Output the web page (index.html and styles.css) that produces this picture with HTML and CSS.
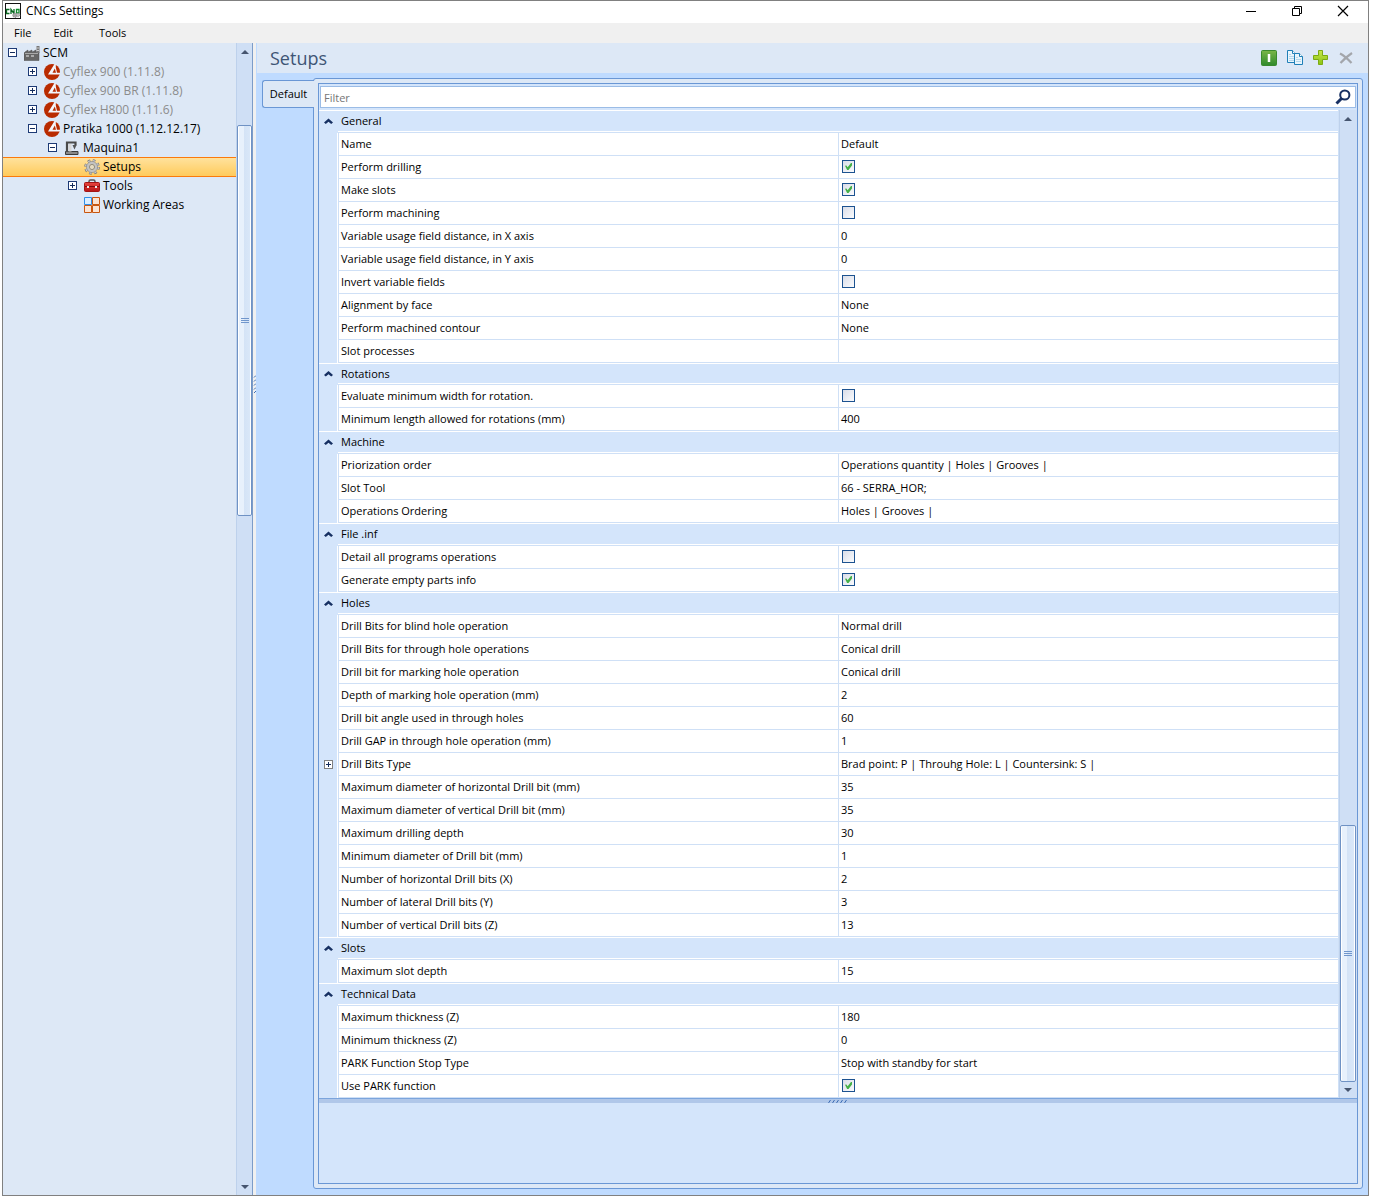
FILE: index.html
```html
<!DOCTYPE html>
<html lang="en">
<head>
<meta charset="utf-8">
<title>CNCs Settings</title>
<link rel="stylesheet" href="styles.css">
</head>
<body>
<svg class="defs" aria-hidden="true">
  <defs>
    <linearGradient id="g-green" x1="0" y1="0" x2="0" y2="1"><stop offset="0" stop-color="#7ab648"/><stop offset="1" stop-color="#2f8a2c"/></linearGradient>
    <linearGradient id="g-lime" x1="0" y1="0" x2="0" y2="1"><stop offset="0" stop-color="#c6e64c"/><stop offset="1" stop-color="#8cc413"/></linearGradient>
    <linearGradient id="g-red" x1="0" y1="0" x2="0" y2="1"><stop offset="0" stop-color="#e8473f"/><stop offset="1" stop-color="#b81414"/></linearGradient>
    <symbol id="brand" viewBox="0 0 16 16"><circle cx="8" cy="8" r="8" fill="#b92b00"/><path d="M10.500 0 4 10.500H16V8.800H13L11.800 3.500V0z" fill="#f3f6fb"/><path d="M10.800 4.500 8.500 8.800H12z" fill="#b92b00"/></symbol>
  </defs>
</svg>
<div class="window">
  <header class="titlebar">
    <svg class="icon16" viewBox="0 0 16 16" aria-hidden="true"><rect x=".5" y=".5" width="15" height="15" fill="#fff" stroke="#111"/><path d="M4.500 6.500h-3v4h3M6 11V6.500L9 10.500V6" fill="none" stroke="#0a6a22" stroke-width="1.300"/><path d="M11.500 6.500h2.500v3.500h-2.500z" fill="none" stroke="#0f8a2c" stroke-width="1.300"/><circle cx="10" cy="12.300" r="2.200" fill="#aaa" stroke="#777" stroke-dasharray="1 1"/><circle cx="13" cy="12" r="1.800" fill="#bbb" stroke="#888" stroke-dasharray="1 1"/></svg>
    <h1 class="window-title">CNCs Settings</h1>
    <div class="window-buttons">
      <button class="window-button" aria-label="Minimize"><svg width="12" height="12" viewBox="0 0 12 12"><path d="M1 6.500h10" stroke="#000"/></svg></button>
      <button class="window-button" aria-label="Restore"><svg width="12" height="12" viewBox="0 0 12 12"><path d="M1.500 3.500h7v7h-7zM3.500 3V1.500h7v7H9" fill="none" stroke="#000"/></svg></button>
      <button class="window-button" aria-label="Close"><svg width="12" height="12" viewBox="0 0 12 12"><path d="M1 1l10 10M11 1 1 11" stroke="#000" stroke-width="1.200"/></svg></button>
    </div>
  </header>
  <nav class="menubar" aria-label="Main menu">
    <button class="menu-item">File</button>
    <button class="menu-item">Edit</button>
    <button class="menu-item">Tools</button>
  </nav>
  <div class="workspace">
    <aside class="sidebar">
      <ul class="tree">
        <li class="node"><button class="toggle open" aria-label="Collapse SCM"></button><svg class="icon16" viewBox="0 0 16 16"><path d="M1 7l3-2v2l4-2v2l4-2v2h3v8.500H0V8z" fill="#666" stroke="#4a4a4a" stroke-width=".5"/><path d="M1 8.500h13" stroke="#aaa"/><path d="M2 11h3M7 11h3" stroke="#eee"/><path d="M12.500 1h3v7h-3z" fill="#777"/><path d="M12.500 3h2.500M12.500 5.500h2.500" stroke="#ccc"/></svg><span>SCM</span></li>
        <li class="node level1 muted"><button class="toggle" aria-label="Expand Cyflex 900"></button><svg class="icon16"><use href="#brand"/></svg><span>Cyflex 900 (1.11.8)</span></li>
        <li class="node level1 muted"><button class="toggle" aria-label="Expand Cyflex 900 BR"></button><svg class="icon16"><use href="#brand"/></svg><span>Cyflex 900 BR (1.11.8)</span></li>
        <li class="node level1 muted"><button class="toggle" aria-label="Expand Cyflex H800"></button><svg class="icon16"><use href="#brand"/></svg><span>Cyflex H800 (1.11.6)</span></li>
        <li class="node level1"><button class="toggle open" aria-label="Collapse Pratika 1000"></button><svg class="icon16"><use href="#brand"/></svg><span>Pratika 1000 (1.12.12.17)</span></li>
        <li class="node level2"><button class="toggle open" aria-label="Collapse Maquina1"></button><svg class="icon16" viewBox="0 0 16 16"><path d="M1.500 11.500v3h12.500v-3z" fill="#888" stroke="#3c3c3c"/><path d="M3 12V2.500h8.500v3" fill="none" stroke="#4a4a4a" stroke-width="2.200"/><path d="M4.500 4h3v7.500h-3z" fill="#d8d8d8"/><path d="M8.500 5h4l-2 4.500z" fill="#555"/></svg><span>Maquina1</span></li>
        <li class="node level3 selected"><span class="toggle-space"></span><svg class="icon16" viewBox="0 0 16 16"><circle cx="8" cy="8" r="6.300" fill="none" stroke="#777" stroke-width="3" stroke-dasharray="2.500 2.450"/><circle cx="8" cy="8" r="6.300" fill="none" stroke="#c9c9c9" stroke-width="1.600" stroke-dasharray="2.100 2.850" stroke-dashoffset="-.2"/><circle cx="8" cy="8" r="4.200" fill="#ffe39a" stroke="#c2c2c2" stroke-width="2.600"/><circle cx="8" cy="8" r="2.600" fill="#e6dcc0" stroke="#777" stroke-width=".8"/><circle cx="8" cy="8" r="5.600" fill="none" stroke="#888" stroke-width=".6"/></svg><span>Setups</span></li>
        <li class="node level3"><button class="toggle" aria-label="Expand Tools"></button><svg class="icon16" viewBox="0 0 16 16"><path d="M5 5V3.500Q5 2 6.500 2h3Q11 2 11 3.500V5" fill="none" stroke="#555" stroke-width="1.500"/><rect x=".5" y="4.500" width="15" height="9" rx="1" fill="url(#g-red)" stroke="#a31515"/><path d="M1 8.500h14" stroke="#7f0d0d"/><path d="M3 8h2v2H3zM11 8h2v2h-2z" fill="#eee"/></svg><span>Tools</span></li>
        <li class="node level3"><span class="toggle-space"></span><svg class="icon16" viewBox="0 0 16 16"><path d="M8.500 .5h7v7h-7zM.5 8.500h7v7h-7zM8.500 8.500h7v7h-7z" fill="#fbe3d3" stroke="#c8560f"/><path d="M.5 .5h7v7h-7z" fill="#d9edff" stroke="#2f8fe8"/></svg><span>Working Areas</span></li>
      </ul>
      <div class="scrollbar tree-scroll" aria-hidden="true"><i class="arrow up"></i><i class="thumb"></i><i class="arrow down"></i></div>
    </aside>
    <div class="splitter" aria-hidden="true"><svg width="3" height="18" viewBox="0 0 3 18"><path d="M1 2.500l2-2M1 6.500l2-2M1 10.500l2-2M1 14.500l2-2M1 18l2-2" stroke="#3d6db5"/></svg></div>
    <main class="main">
      <div class="main-header">
        <h2 class="main-title">Setups</h2>
        <div class="toolbar">
          <button class="tool" aria-label="Activate"><svg class="icon16" viewBox="0 0 16 16"><rect x=".5" y=".5" width="15" height="15" rx="1" fill="url(#g-green)" stroke="#3a8a2e"/><path d="M8 4v8" stroke="#fff" stroke-width="2.500"/></svg></button>
          <button class="tool" aria-label="Copy"><svg class="icon16" viewBox="0 0 16 16"><path d="M.5 .5h5l3 3v9h-8z" fill="#e9f5fc" stroke="#2080b8"/><path d="M5.500 .5v3h3" fill="#fff" stroke="#2080b8"/><path d="M2 4.500h2M2 6.500h5M2 8.500h5M2 10.500h5" stroke="#b5d8ec"/><path d="M7.500 3.500h5l3 3v8h-8z" fill="#e9f5fc" stroke="#2080b8"/><path d="M12.500 3.500v3h3" fill="#fff" stroke="#2080b8"/><path d="M9 7.500h2M9 9.500h5M9 11.500h5" stroke="#b5d8ec"/></svg></button>
          <button class="tool" aria-label="Add"><svg class="icon16" viewBox="0 0 16 16"><path d="M5.500 .5h4v5h5v4h-5v5h-4v-5h-5v-4h5z" fill="url(#g-lime)" stroke="#7cab12"/></svg></button>
          <button class="tool" aria-label="Delete"><svg class="icon16" viewBox="0 0 16 16"><path d="M1 3.500Q6 6 12.500 13M13 3Q7 7 1.500 13" fill="none" stroke="#a3a6ab" stroke-width="2.200"/></svg></button>
        </div>
      </div>
      <div class="content">
        <button class="tab">Default</button>
        <section class="panel">
          <div class="panel-inner">
            <div class="filter">
              <input class="filter-input" type="text" placeholder="Filter" aria-label="Filter">
              <svg class="search-icon" width="16" height="16" viewBox="0 0 16 16" aria-hidden="true"><circle cx="9.800" cy="6" r="4.600" fill="#fff" stroke="#173062" stroke-width="2"/><path d="M6.500 9.500l-5 5" stroke="#173062" stroke-width="3"/></svg>
            </div>
            <div class="grid-area">
              <table class="properties">
                <colgroup><col class="gutter-col"><col><col></colgroup>
                <tbody>
                  <tr class="category"><td class="gutter"><button class="chevron" aria-label="Collapse General"></button></td><th colspan="2">General</th></tr>
                  <tr><td class="gutter"></td><td>Name</td><td>Default</td></tr>
                  <tr><td class="gutter"></td><td><label for="drilling">Perform drilling</label></td><td><input type="checkbox" id="drilling" checked></td></tr>
                  <tr><td class="gutter"></td><td><label for="slots">Make slots</label></td><td><input type="checkbox" id="slots" checked></td></tr>
                  <tr><td class="gutter"></td><td><label for="machining">Perform machining</label></td><td><input type="checkbox" id="machining"></td></tr>
                  <tr><td class="gutter"></td><td>Variable usage field distance, in X axis</td><td>0</td></tr>
                  <tr><td class="gutter"></td><td>Variable usage field distance, in Y axis</td><td>0</td></tr>
                  <tr><td class="gutter"></td><td><label for="invert">Invert variable fields</label></td><td><input type="checkbox" id="invert"></td></tr>
                  <tr><td class="gutter"></td><td>Alignment by face</td><td>None</td></tr>
                  <tr><td class="gutter"></td><td>Perform machined contour</td><td>None</td></tr>
                  <tr><td class="gutter"></td><td>Slot processes</td><td></td></tr>
                </tbody>
                <tbody>
                  <tr class="category compact"><td class="gutter"><button class="chevron" aria-label="Collapse Rotations"></button></td><th colspan="2">Rotations</th></tr>
                  <tr><td class="gutter"></td><td><label for="minwidth">Evaluate minimum width for rotation.</label></td><td><input type="checkbox" id="minwidth"></td></tr>
                  <tr><td class="gutter"></td><td>Minimum length allowed for rotations (mm)</td><td>400</td></tr>
                </tbody>
                <tbody>
                  <tr class="category"><td class="gutter"><button class="chevron" aria-label="Collapse Machine"></button></td><th colspan="2">Machine</th></tr>
                  <tr><td class="gutter"></td><td>Priorization order</td><td>Operations quantity | Holes | Grooves |</td></tr>
                  <tr><td class="gutter"></td><td>Slot Tool</td><td>66 - SERRA_HOR;</td></tr>
                  <tr><td class="gutter"></td><td>Operations Ordering</td><td>Holes | Grooves |</td></tr>
                </tbody>
                <tbody>
                  <tr class="category"><td class="gutter"><button class="chevron" aria-label="Collapse File .inf"></button></td><th colspan="2">File .inf</th></tr>
                  <tr><td class="gutter"></td><td><label for="detail">Detail all programs operations</label></td><td><input type="checkbox" id="detail"></td></tr>
                  <tr><td class="gutter"></td><td><label for="empty">Generate empty parts info</label></td><td><input type="checkbox" id="empty" checked></td></tr>
                </tbody>
                <tbody>
                  <tr class="category"><td class="gutter"><button class="chevron" aria-label="Collapse Holes"></button></td><th colspan="2">Holes</th></tr>
                  <tr><td class="gutter"></td><td>Drill Bits for blind hole operation</td><td>Normal drill</td></tr>
                  <tr><td class="gutter"></td><td>Drill Bits for through hole operations</td><td>Conical drill</td></tr>
                  <tr><td class="gutter"></td><td>Drill bit for marking hole operation</td><td>Conical drill</td></tr>
                  <tr><td class="gutter"></td><td>Depth of marking hole operation (mm)</td><td>2</td></tr>
                  <tr><td class="gutter"></td><td>Drill bit angle used in through holes</td><td>60</td></tr>
                  <tr><td class="gutter"></td><td>Drill GAP in through hole operation (mm)</td><td>1</td></tr>
                  <tr><td class="gutter"><button class="toggle" aria-label="Expand Drill Bits Type"></button></td><td>Drill Bits Type</td><td>Brad point: P | Throuhg Hole: L | Countersink: S |</td></tr>
                  <tr><td class="gutter"></td><td>Maximum diameter of horizontal Drill bit (mm)</td><td>35</td></tr>
                  <tr><td class="gutter"></td><td>Maximum diameter of vertical Drill bit (mm)</td><td>35</td></tr>
                  <tr><td class="gutter"></td><td>Maximum drilling depth</td><td>30</td></tr>
                  <tr><td class="gutter"></td><td>Minimum diameter of Drill bit (mm)</td><td>1</td></tr>
                  <tr><td class="gutter"></td><td>Number of horizontal Drill bits (X)</td><td>2</td></tr>
                  <tr><td class="gutter"></td><td>Number of lateral Drill bits (Y)</td><td>3</td></tr>
                  <tr><td class="gutter"></td><td>Number of vertical Drill bits (Z)</td><td>13</td></tr>
                </tbody>
                <tbody>
                  <tr class="category"><td class="gutter"><button class="chevron" aria-label="Collapse Slots"></button></td><th colspan="2">Slots</th></tr>
                  <tr><td class="gutter"></td><td>Maximum slot depth</td><td>15</td></tr>
                </tbody>
                <tbody>
                  <tr class="category"><td class="gutter"><button class="chevron" aria-label="Collapse Technical Data"></button></td><th colspan="2">Technical Data</th></tr>
                  <tr><td class="gutter"></td><td>Maximum thickness (Z)</td><td>180</td></tr>
                  <tr><td class="gutter"></td><td>Minimum thickness (Z)</td><td>0</td></tr>
                  <tr><td class="gutter"></td><td>PARK Function Stop Type</td><td>Stop with standby for start</td></tr>
                  <tr><td class="gutter"></td><td><label for="park">Use PARK function</label></td><td><input type="checkbox" id="park" checked></td></tr>
                </tbody>
              </table>
              <div class="scrollbar grid-scroll" aria-hidden="true"><i class="arrow up"></i><i class="thumb"></i><i class="arrow down"></i></div>
            </div>
            <div class="row-splitter" aria-hidden="true"><svg width="20" height="3" viewBox="0 0 20 3"><path d="M.5 3l2-3M4.500 3l2-3M8.500 3l2-3M12.500 3l2-3M16.500 3l2-3" stroke="#3d6db5"/></svg></div>
            <div class="description"></div>
          </div>
        </section>
      </div>
    </main>
  </div>
</div>
</body>
</html>
```
FILE: styles.css
```css
* { box-sizing: border-box; }
body {
  margin: 0;
  background: #fff;
  color: #000;
  font-family: "Open Sans", "Noto Sans", sans-serif;
  font-size: 11px;
}
button {
  padding: 0;
  border: 0;
  background: none;
  color: inherit;
  font: inherit;
}
svg { display: block; flex: none; }
.defs { position: absolute; width: 0; height: 0; }
.icon16 { width: 16px; height: 16px; }

.window {
  display: flex;
  flex-direction: column;
  min-height: calc(100vh - 8px);
  margin: 0 8px 8px 2px;
  border: 1px solid #808080;
}

/* Title bar and menu */
.titlebar {
  display: flex;
  align-items: center;
  gap: 5px;
  height: 22px;
  padding: 0 2px 2px;
}
.window-title {
  flex: 1;
  margin: 0;
  font-size: 12px;
  font-weight: 400;
  line-height: 20px;
}
.window-buttons { display: flex; }
.window-button {
  display: grid;
  place-items: center;
  width: 46px;
  height: 20px;
}
.menubar {
  display: flex;
  gap: 22px;
  height: 20px;
  padding: 0 0 2px 11px;
  background: #f0f0f0;
}
.menu-item:last-child { margin-left: 4px; }

.workspace { display: flex; flex: 1; }

/* Machine tree */
.sidebar {
  display: flex;
  width: 250px;
  border-right: 1px solid #7c9cc8;
  background: #dde8f6;
}
.tree {
  flex: 1;
  margin: 0;
  padding: 0;
  list-style: none;
  font-size: 12px;
}
.node {
  display: flex;
  align-items: center;
  height: 19px;
  padding-left: 5px;
  line-height: 19px;
}
.node .icon16 { margin: 0 3px 0 7px; }
.level1 { padding-left: 25px; }
.level2 { padding-left: 45px; }
.level3 { padding-left: 65px; }
.muted { color: #8c8c8c; }
.toggle-space { width: 9px; }
.selected {
  background: linear-gradient(#ffe3a0, #ffcb5c);
  box-shadow: inset 0 1px #fb7a0c, 0 1px #fb7a0c;
}
.toggle {
  display: block;
  width: 9px;
  height: 9px;
  border: 1px solid #1d3a75;
  background:
    linear-gradient(#142c5c, #142c5c) center / 5px 1px no-repeat,
    linear-gradient(#142c5c, #142c5c) center / 1px 5px no-repeat,
    #fff;
}
.toggle.open { background: linear-gradient(#142c5c, #142c5c) center / 5px 1px no-repeat, #fff; }

/* Scroll bars */
.scrollbar {
  display: grid;
  flex: none;
  border-left: 1px solid #bdd1ec;
  background: #cfdff5;
}
.tree-scroll {
  width: 16px;
  grid-template-rows: 17px 65fr 391fr 662fr 17px;
}
.grid-scroll {
  width: 18px;
  grid-template-rows: 17px 698fr 257fr 16px;
  padding-right: 1px;
}
.thumb {
  grid-row: 3;
  border: 1px solid #6f92c4;
  border-radius: 2px;
  background:
    linear-gradient(#7096cc 1px, transparent 1px 2px, #7096cc 2px 3px, transparent 3px 4px, #7096cc 4px) center / 8px 5px no-repeat,
    linear-gradient(90deg, #fff 1px, #e8f1fc 1px, #e8f1fc 45%, #d4e3f6 45%, #d9e7f8 90%, #fff 90%);
}
.arrow {
  place-self: center;
  width: 0;
  border: 4px solid transparent;
}
.arrow.up { grid-row: 1; border-top: 0; border-bottom-color: #46556f; }
.arrow.down { grid-row: -2; border-bottom: 0; border-top-color: #46556f; }

.splitter {
  width: 3px;
  padding-top: 332px;
  background: #f0f0f0;
}

/* Setup pane */
.main {
  display: flex;
  flex: 1;
  flex-direction: column;
  background: #bfdbff;
}
.main-header {
  display: flex;
  align-items: center;
  justify-content: space-between;
  height: 30px;
  margin-left: 1px;
  padding: 0 13px;
  background: #dde8f6;
}
.main-title {
  margin: 0;
  color: #3e5575;
  font-size: 18px;
  font-weight: 400;
}
.toolbar { display: flex; gap: 10px; }
.content {
  display: flex;
  flex: 1;
  align-items: flex-start;
  padding: 5px 5px 6px 6px;
}
.tab {
  z-index: 1;
  width: 52px;
  height: 28px;
  margin-top: 2px;
  padding-bottom: 2px;
  border: 1px solid #6a97d5;
  border-right: 0;
  border-radius: 3px 0 0 3px;
  background: #dde8f6;
}
.panel {
  display: flex;
  flex: 1;
  align-self: stretch;
  margin-left: -1px;
  padding: 4px;
  border: 1px solid #6a97d5;
  border-radius: 3px;
  background: #dde8f6;
}
.panel-inner {
  display: flex;
  flex: 1;
  flex-direction: column;
  border: 1px solid #6a97d5;
  background: #d4e5fb;
}
.filter {
  display: flex;
  align-items: center;
  height: 22px;
  margin: 2px 1px;
  padding: 0 4px 0 3px;
  border: 1px solid #9bbce6;
  background: #fff;
}
.filter-input {
  flex: 1;
  padding: 0;
  border: 0;
  outline: 0;
  font: inherit;
}
.filter-input::placeholder { color: #767676; opacity: 1; }

/* Property grid */
.grid-area {
  display: grid;
  grid-template-columns: 1fr auto;
}
.properties {
  width: 100%;
  border-right: 1px solid #cfe0f6;
  border-spacing: 0;
  table-layout: fixed;
  background: #fff;
}
.gutter-col { width: 19px; }
.properties td,
.properties th {
  height: 23px;
  padding: 0 2px;
  border-bottom: 1px solid #cfe0f6;
  border-left: 1px solid #cfe0f6;
  font-weight: 400;
  line-height: 22px;
  text-align: left;
}
.properties .gutter {
  padding: 0 0 0 5px;
  border: 0;
  background: #d4e5fb;
  box-shadow: inset -1px 0 #fff;
}
.properties .category th,
.properties .category .gutter {
  border-left: 0;
  border-bottom: 1px solid #cfe0f6;
  background: #d4e5fb;
  box-shadow: inset 0 1px #fff, inset 0 -1px #fff;
}
.properties .category th { padding-left: 3px; }
.properties .category .gutter {
  border-bottom-color: #d4e5fb;
  box-shadow: inset 0 1px #fff;
}
.properties .compact th,
.properties .compact td { height: 22px; line-height: 20px; }
.properties .toggle { border-color: #808080; }
.chevron {
  display: block;
  width: 9px;
  height: 8px;
  background: #173062;
  clip-path: polygon(50% 20%, 100% 68%, 80% 88%, 50% 60%, 20% 88%, 0 68%);
}
.properties input {
  display: block;
  width: 13px;
  height: 13px;
  margin: 0 0 1px 1px;
  appearance: none;
  border: 1px solid #1c5290;
  background: linear-gradient(135deg, #d9dde8, #fafbfd);
}
.properties input:checked::before {
  content: "";
  display: block;
  width: 7px;
  height: 7px;
  margin: 2px;
  background: #45b048;
  clip-path: polygon(0 40%, 20% 35%, 38% 60%, 85% 0, 100% 0, 100% 35%, 50% 100%, 30% 100%);
}

/* Description area */
.row-splitter {
  display: grid;
  place-items: center;
  height: 5px;
  border-top: 1px solid #7ba4dc;
  background: #b0c7e9;
}
.description { flex: 1; min-height: 80px; }
```
